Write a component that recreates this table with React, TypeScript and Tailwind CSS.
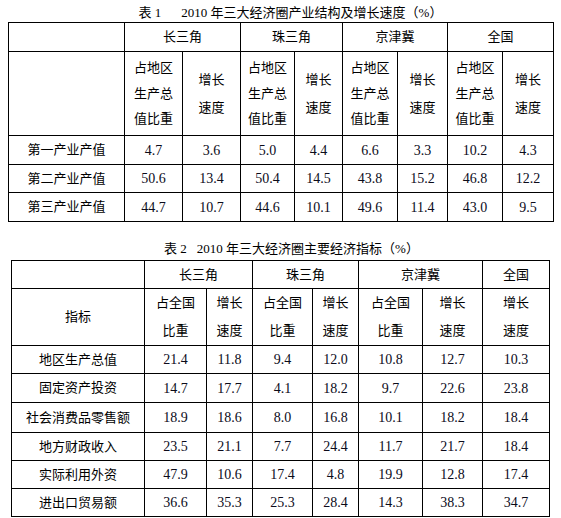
import React from "react";

type Row = { label: string; values: string[] };

const table1Rows: Row[] = [
	{ label: "第一产业产值", values: ["4.7", "3.6", "5.0", "4.4", "6.6", "3.3", "10.2", "4.3"] },
	{ label: "第二产业产值", values: ["50.6", "13.4", "50.4", "14.5", "43.8", "15.2", "46.8", "12.2"] },
	{ label: "第三产业产值", values: ["44.7", "10.7", "44.6", "10.1", "49.6", "11.4", "43.0", "9.5"] },
];

const table2Rows: Row[] = [
	{ label: "地区生产总值", values: ["21.4", "11.8", "9.4", "12.0", "10.8", "12.7", "10.3"] },
	{ label: "固定资产投资", values: ["14.7", "17.7", "4.1", "18.2", "9.7", "22.6", "23.8"] },
	{ label: "社会消费品零售额", values: ["18.9", "18.6", "8.0", "16.8", "10.1", "18.2", "18.4"] },
	{ label: "地方财政收入", values: ["23.5", "21.1", "7.7", "24.4", "11.7", "21.7", "18.4"] },
	{ label: "实际利用外资", values: ["47.9", "10.6", "17.4", "4.8", "19.9", "12.8", "17.4"] },
	{ label: "进出口贸易额", values: ["36.6", "35.3", "25.3", "28.4", "14.3", "38.3", "34.7"] },
];

const t1Widths = [116, 58, 58, 54, 48, 55, 50, 55, 51];
const t1Heights = [29, 28, 29];
const t2Widths = [133, 62, 46, 60, 46, 64, 60, 67];
const t2Heights = [28, 29, 30, 28, 28, 28];

const cell = "border border-black text-center align-middle p-0";
const zh = "text-[13px] text-black";
const num = "text-[14px] text-[#0b0b1a]";

const App = () => {
	return (
		<div
			className="w-[561px] h-[518px] bg-white text-black"
			style={{ fontFamily: '"Liberation Serif", "Noto Sans CJK SC", serif' }}
		>
			{/* table 1 title */}
			<div className="h-[22px] pt-[4px] pl-[20px] text-center text-[13px] leading-[18px]">
				<span>表 1</span>
				<span className="inline-block w-[20px]"></span>
				<span>2010 年三大经济圈产业结构及增长速度（%）</span>
			</div>

			<table className="ml-[8px] w-[545px] table-fixed border-collapse">
				<colgroup>
					{t1Widths.map((w, i) => (
						<col key={i} style={{ width: w }} />
					))}
				</colgroup>
				<tbody>
					<tr className="h-[29px]">
						<td className={cell}></td>
						{["长三角", "珠三角", "京津冀", "全国"].map((t) => (
							<td key={t} colSpan={2} className={`${cell} ${zh}`}>
								{t}
							</td>
						))}
					</tr>
					<tr className="h-[84px]">
						<td className={cell}></td>
						{[0, 1, 2, 3].map((i) => (
							<React.Fragment key={i}>
								<td className={`${cell} ${zh} leading-[25.5px]`}>
									占地区
									<br />
									生产总
									<br />
									值比重
								</td>
								<td className={`${cell} ${zh} leading-[28px]`}>
									增长
									<br />
									速度
								</td>
							</React.Fragment>
						))}
					</tr>
					{table1Rows.map((r, ri) => (
						<tr key={r.label} style={{ height: t1Heights[ri] }}>
							<td className={`${cell} ${zh}`}>{r.label}</td>
							{r.values.map((v, vi) => (
								<td key={vi} className={`${cell} ${num}`}>
									{v}
								</td>
							))}
						</tr>
					))}
				</tbody>
			</table>

			{/* table 2 title */}
			<div className="mt-[17px] h-[21px] pt-[1px] pl-[22px] text-center text-[13px] leading-[18px]">
				<span>表 2</span>
				<span className="inline-block w-[10px]"></span>
				<span>2010 年三大经济圈主要经济指标（%）</span>
			</div>

			<table className="ml-[11px] w-[538px] table-fixed border-collapse">
				<colgroup>
					{t2Widths.map((w, i) => (
						<col key={i} style={{ width: w }} />
					))}
				</colgroup>
				<tbody>
					<tr className="h-[28px]">
						<td className={cell}></td>
						{["长三角", "珠三角", "京津冀"].map((t) => (
							<td key={t} colSpan={2} className={`${cell} ${zh}`}>
								{t}
							</td>
						))}
						<td className={`${cell} ${zh}`}>全国</td>
					</tr>
					<tr className="h-[57px]">
						<td className={`${cell} ${zh}`}>指标</td>
						{[0, 1, 2].map((i) => (
							<React.Fragment key={i}>
								<td className={`${cell} ${zh} leading-[28px]`}>
									占全国
									<br />
									比重
								</td>
								<td className={`${cell} ${zh} leading-[28px]`}>
									增长
									<br />
									速度
								</td>
							</React.Fragment>
						))}
						<td className={`${cell} ${zh} leading-[28px]`}>
							增长
							<br />
							速度
						</td>
					</tr>
					{table2Rows.map((r, ri) => (
						<tr key={r.label} style={{ height: t2Heights[ri] }}>
							<td className={`${cell} ${zh}`}>{r.label}</td>
							{r.values.map((v, vi) => (
								<td key={vi} className={`${cell} ${num}`}>
									{v}
								</td>
							))}
						</tr>
					))}
				</tbody>
			</table>
		</div>
	);
};

export default App;
